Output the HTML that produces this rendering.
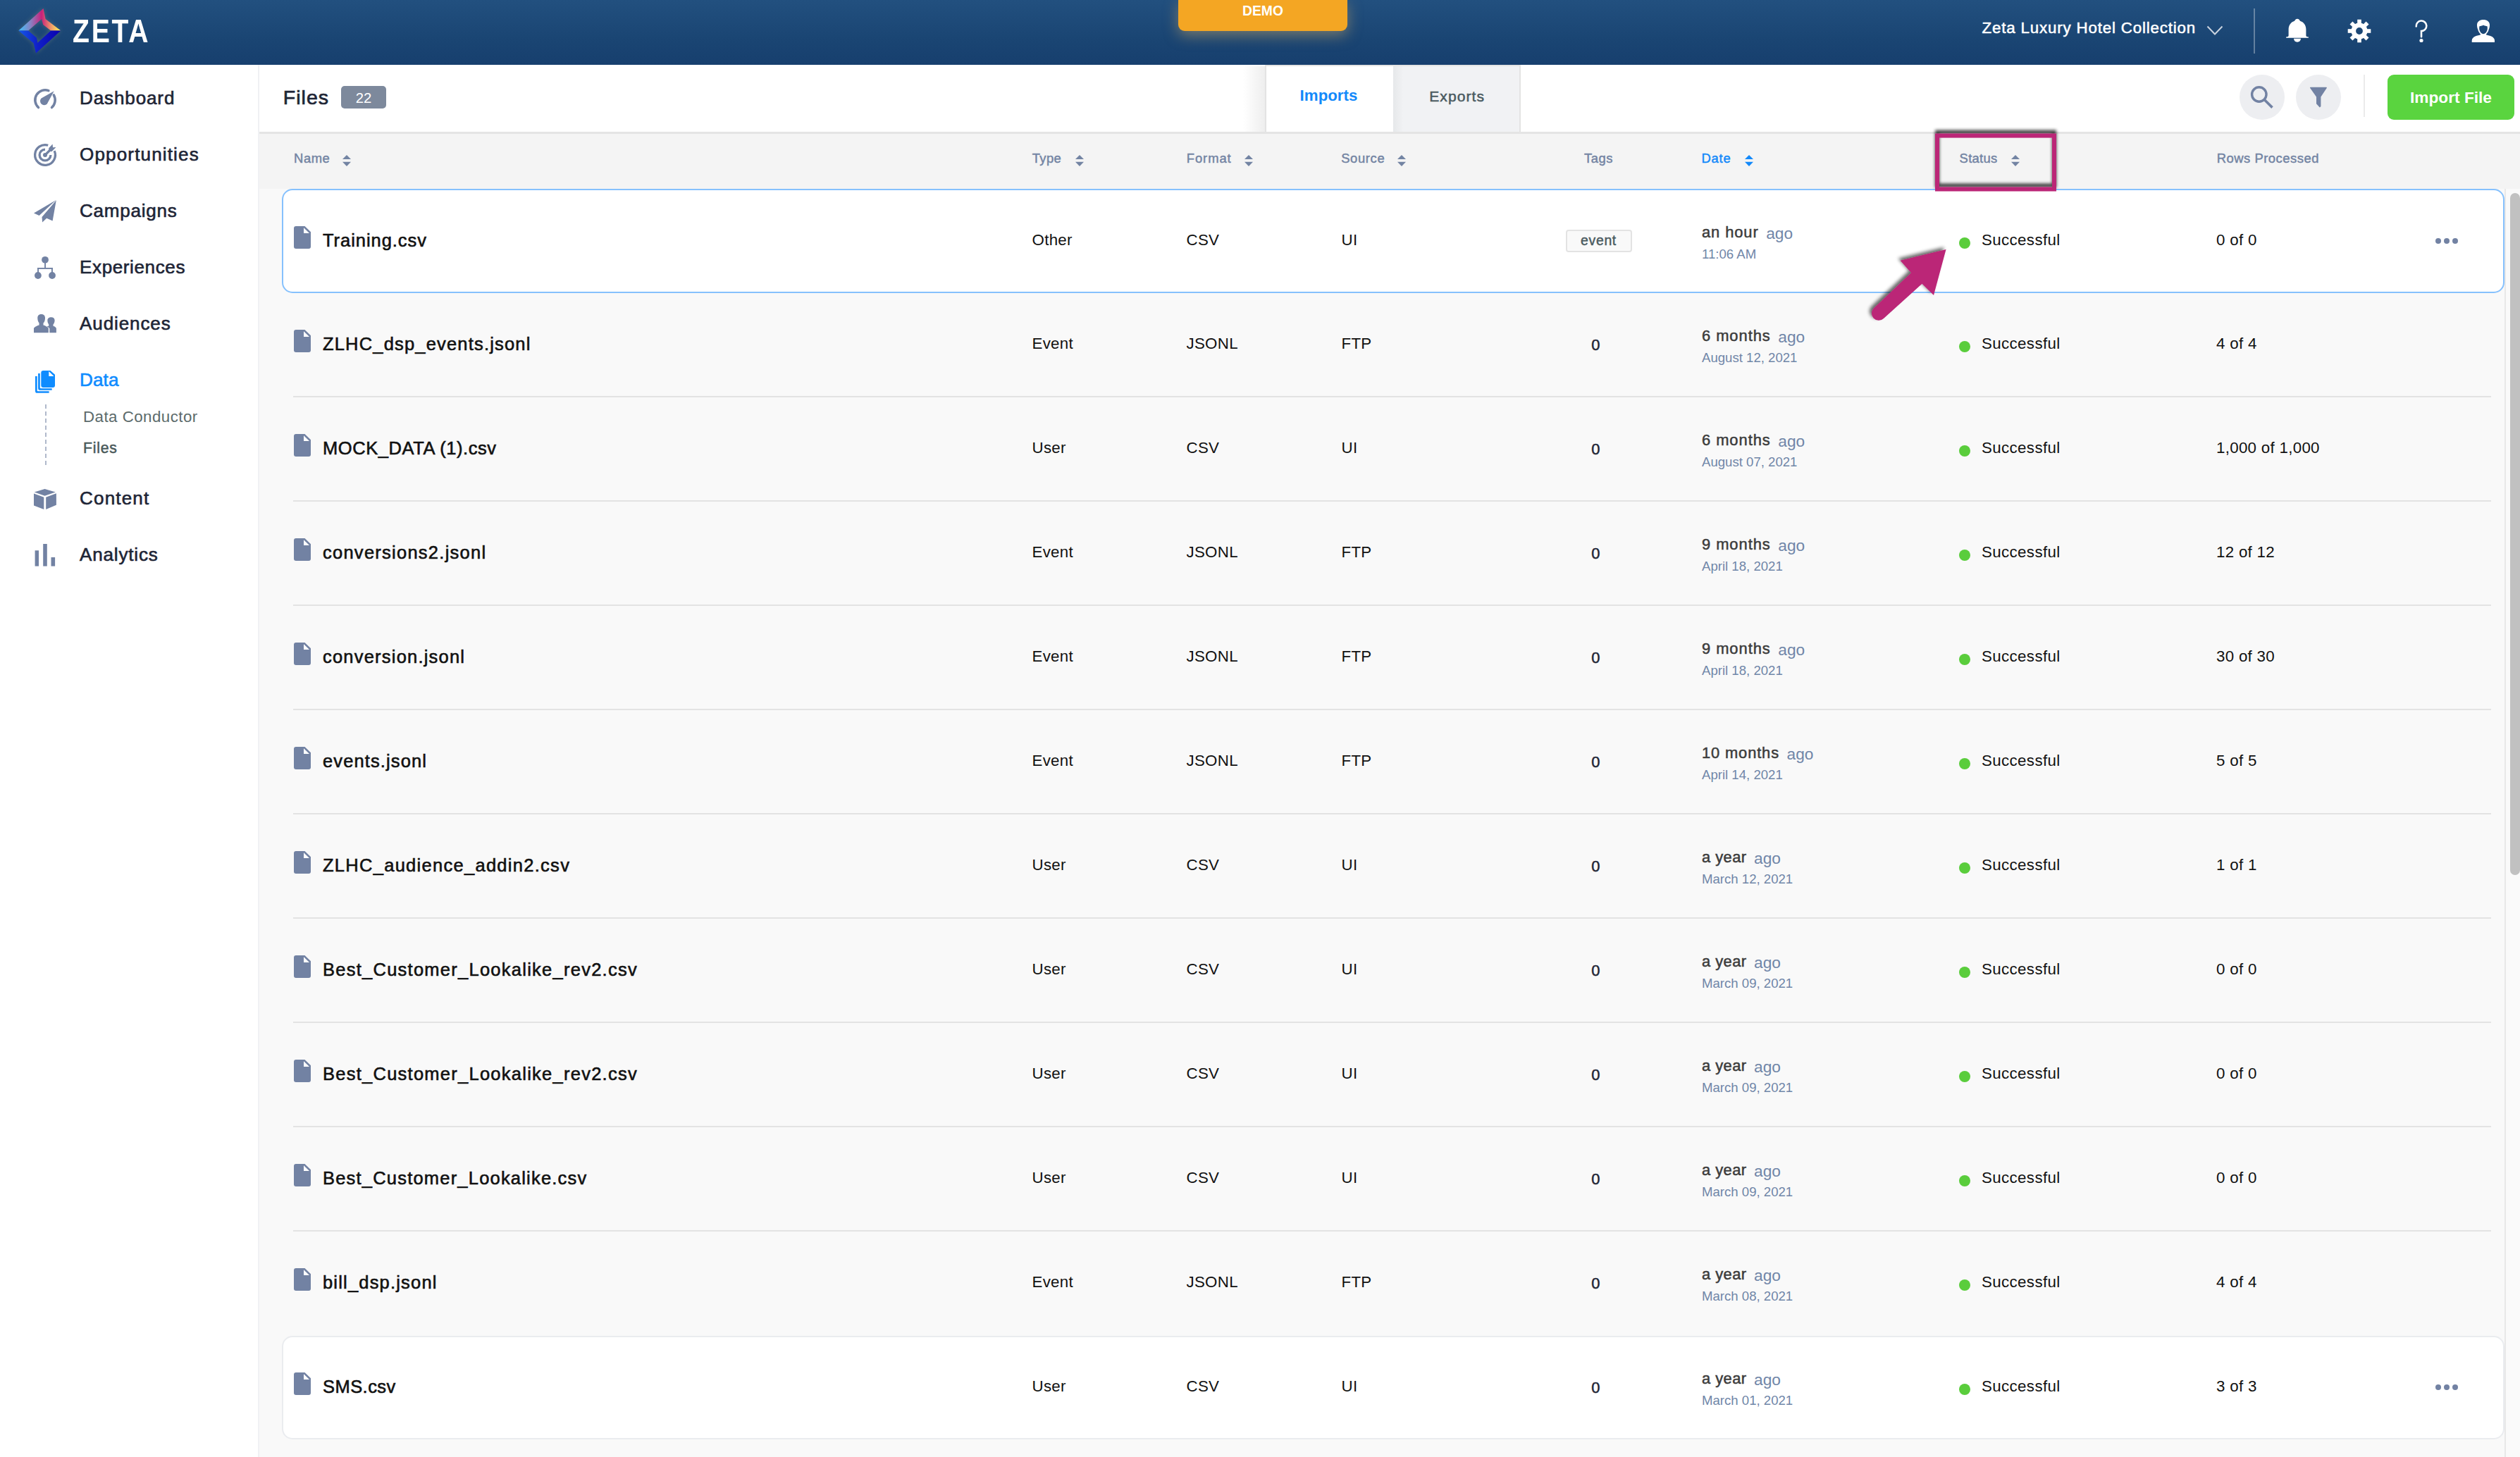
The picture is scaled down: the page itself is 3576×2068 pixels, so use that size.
<!DOCTYPE html>
<html><head><meta charset="utf-8"><title>Files</title>
<style>
html,body{margin:0;padding:0;}
body{width:3576px;height:2068px;overflow:hidden;position:relative;background:#f9f9f9;font-family:"Liberation Sans", sans-serif;}
.t{position:absolute;white-space:nowrap;font-family:"Liberation Sans", sans-serif;}
</style></head><body>
<div style="position:absolute;left:0px;top:0px;width:3576px;height:92px;background:linear-gradient(180deg,#22507f 0%,#1a4573 60%,#173f6e 100%);"></div>
<svg style="position:absolute;left:0px;top:0px;overflow:visible;" width="100" height="92" viewBox="0 0 100 92">
<defs>
<linearGradient id="lgU" x1="26" y1="0" x2="86" y2="0" gradientUnits="userSpaceOnUse">
<stop offset="0" stop-color="#3cc4ff"/><stop offset="0.3" stop-color="#8a7fc0"/><stop offset="0.55" stop-color="#c8207a"/><stop offset="0.78" stop-color="#ef9a6a"/><stop offset="1" stop-color="#fff75a"/></linearGradient>
<linearGradient id="lgD" x1="26" y1="0" x2="86" y2="0" gradientUnits="userSpaceOnUse">
<stop offset="0" stop-color="#1458e8"/><stop offset="0.45" stop-color="#1020c8"/><stop offset="1" stop-color="#0a00b0"/></linearGradient>
<filter id="lglow" x="-30%" y="-30%" width="160%" height="160%"><feGaussianBlur stdDeviation="3"/></filter>
</defs>
<g opacity="0.3" filter="url(#lglow)" fill="#b0b080"><polygon points="26.3,43.6 61.5,12 64.6,26.9 86.3,43.6 72.2,43.6 61.2,35 59.1,27.1 40.1,43.6"/><polygon points="26.3,43.6 40.1,43.6 51.8,53.5 53.4,60.8 72.2,43.6 86.3,43.6 51,75.4 47.6,61.3"/></g>
<polygon fill="url(#lgU)" points="26.3,43.6 61.5,12 64.6,26.9 86.3,43.6 72.2,43.6 61.2,35 59.1,27.1 40.1,43.6"/>
<polygon fill="url(#lgD)" points="26.3,43.6 40.1,43.6 51.8,53.5 53.4,60.8 72.2,43.6 86.3,43.6 51,75.4 47.6,61.3"/>
</svg>
<div class="t" style="left:103.00px;top:21.78px;font-size:45.5px;line-height:45.5px;color:#ffffff;font-weight:700;letter-spacing:3.200px;transform:scaleX(0.86);transform-origin:0 0;">ZETA</div>
<div style="position:absolute;left:1672px;top:0px;width:240px;height:44px;background:#f4a623;border-radius:0 0 9px 9px;box-shadow:0 6px 20px rgba(210,170,100,0.5);"></div>
<div class="t" style="left:1292.00px;width:1000px;text-align:center;top:5.66px;font-size:19.3px;line-height:19.3px;color:#ffffff;font-weight:700;">DEMO</div>
<div class="t" style="left:2812.50px;top:29.23px;font-size:22.29px;line-height:22.29px;color:#ffffff;letter-spacing:0.847px;-webkit-text-stroke:0.53px #ffffff;">Zeta Luxury Hotel Collection</div>
<svg style="position:absolute;left:3131px;top:36px;overflow:visible;" width="24" height="14" viewBox="0 0 24 14"><polyline points="1.5,1.5 12,12.5 22.5,1.5" fill="none" stroke="#c9d2de" stroke-width="2"/></svg>
<div style="position:absolute;left:3198px;top:12px;width:2px;height:64px;background:rgba(255,255,255,0.32);"></div>
<svg style="position:absolute;left:3242px;top:25.2px;overflow:visible;" width="36" height="36" viewBox="0 0 36 36"><path fill="#fff" d="M18,1.8c-2.1,0-3.4,1.6-3.9,2.9C9.3,6.2,5.6,10.4,5.6,16.7V25.6C5.6,26.8,4.5,27.6,2.1,27.6V28.8H33.9V27.6C31.5,27.6,30.4,26.8,30.4,25.6V16.7C30.4,10.4,26.7,6.2,21.9,4.7C21.4,3.4,20.1,1.8,18,1.8Z"/><path fill="#fff" d="M13,29.8H23A5,5 0 0 1 13,29.8Z"/></svg>
<svg style="position:absolute;left:3330px;top:25.7px;overflow:visible;" width="36" height="36" viewBox="0 0 36 36"><rect x="15.2" y="1.6999999999999993" width="5.6" height="8" transform="rotate(0 18 18)" fill="#fff"/><rect x="15.2" y="1.6999999999999993" width="5.6" height="8" transform="rotate(45 18 18)" fill="#fff"/><rect x="15.2" y="1.6999999999999993" width="5.6" height="8" transform="rotate(90 18 18)" fill="#fff"/><rect x="15.2" y="1.6999999999999993" width="5.6" height="8" transform="rotate(135 18 18)" fill="#fff"/><rect x="15.2" y="1.6999999999999993" width="5.6" height="8" transform="rotate(180 18 18)" fill="#fff"/><rect x="15.2" y="1.6999999999999993" width="5.6" height="8" transform="rotate(225 18 18)" fill="#fff"/><rect x="15.2" y="1.6999999999999993" width="5.6" height="8" transform="rotate(270 18 18)" fill="#fff"/><rect x="15.2" y="1.6999999999999993" width="5.6" height="8" transform="rotate(315 18 18)" fill="#fff"/><circle cx="18" cy="18" r="8.2" fill="none" stroke="#fff" stroke-width="6.6"/></svg>
<svg style="position:absolute;left:3424px;top:26px;overflow:visible;" width="24" height="36" viewBox="0 0 24 36"><path d="M4.75,11.4A7.3,7.3 0 1 1 12,18.1V26.2" fill="none" stroke="#fff" stroke-width="2.6" stroke-linecap="round"/><circle cx="12" cy="31.5" r="2.6" fill="#fff"/></svg>
<svg style="position:absolute;left:3506px;top:26px;overflow:visible;" width="36" height="36" viewBox="0 0 36 36"><path fill="#fff" d="M18,2C13,2 9,4.6 9,9.5C9,12 9.5,14.3 10.3,15.8C10.8,18.5 12,20.6 13.8,22.2L14.2,23.2C12.5,23.8 9,24.4 6.5,25.6C3.8,26.9 1.7,28.8 1.7,31.5V34H34V31.5C34,28.8 31.9,26.9 29.2,25.6C26.7,24.4 23.3,23.8 21.8,23.2L22.2,22.2C24,20.6 25.2,18.5 25.7,15.8C26.5,14.3 27,12 27,9.5C27,4.6 23,2 18,2ZM18,9.5C19,10.5 21.5,10.8 23.5,11.2C24,13 24,16 23.2,17.5C22.3,20 20.5,22.2 18,22.2C15.5,22.2 13.7,20 12.8,17.5C12,16 12,13 12.5,11.2C14.5,10.8 17,10.5 18,9.5Z"/></svg>
<div style="position:absolute;left:0px;top:92px;width:366px;height:1976px;background:#ffffff;"></div>
<div style="position:absolute;left:366px;top:92px;width:2px;height:1976px;background:#f0f1f4;"></div>
<div class="t" style="left:113.00px;top:125.93px;font-size:26.07px;line-height:26.07px;color:#1e2536;letter-spacing:0.859px;-webkit-text-stroke:0.62px #1e2536;">Dashboard</div>
<div class="t" style="left:113.00px;top:205.73px;font-size:26.07px;line-height:26.07px;color:#1e2536;letter-spacing:1.140px;-webkit-text-stroke:0.62px #1e2536;">Opportunities</div>
<div class="t" style="left:113.00px;top:285.73px;font-size:26.07px;line-height:26.07px;color:#1e2536;letter-spacing:0.759px;-webkit-text-stroke:0.62px #1e2536;">Campaigns</div>
<div class="t" style="left:113.00px;top:365.93px;font-size:26.07px;line-height:26.07px;color:#1e2536;letter-spacing:0.608px;-webkit-text-stroke:0.62px #1e2536;">Experiences</div>
<div class="t" style="left:113.00px;top:445.83px;font-size:26.07px;line-height:26.07px;color:#1e2536;letter-spacing:0.884px;-webkit-text-stroke:0.62px #1e2536;">Audiences</div>
<div class="t" style="left:113.00px;top:525.83px;font-size:26.07px;line-height:26.07px;color:#0f8cff;letter-spacing:0.125px;-webkit-text-stroke:0.62px #0f8cff;">Data</div>
<div class="t" style="left:113.00px;top:694.13px;font-size:26.07px;line-height:26.07px;color:#1e2536;letter-spacing:1.163px;-webkit-text-stroke:0.62px #1e2536;">Content</div>
<div class="t" style="left:113.00px;top:774.23px;font-size:26.07px;line-height:26.07px;color:#1e2536;letter-spacing:0.809px;-webkit-text-stroke:0.62px #1e2536;">Analytics</div>
<svg style="position:absolute;left:42px;top:120px;overflow:visible;" width="44" height="44" viewBox="0 0 44 44"><g fill="none" stroke="#7282a3" stroke-width="3.5" stroke-linecap="round">
<path d="M12.50,32.55A14.2,14.2 0 0 1 26.86,8.66"/><path d="M34.30,14.90A14.2,14.2 0 0 1 31.50,32.55"/></g>
<path fill="#7282a3" d="M34.7,9.2L24.8,27.4A5.6,5.6 0 1 1 16.6,19.5Z"/></svg>
<svg style="position:absolute;left:42px;top:200px;overflow:visible;" width="44" height="44" viewBox="0 0 44 44"><g fill="none" stroke="#7282a3" stroke-width="3.3">
<path d="M35.16,14.14A14.4,14.4 0 1 1 26.21,6.23"/>
<path d="M29.90,20.00A7.9,7.9 0 1 1 22.00,12.10"/></g>
<circle cx="22" cy="20" r="3" fill="#7282a3"/>
<path d="M22,20L31,11" stroke="#7282a3" stroke-width="3.2"/>
<path fill="#7282a3" d="M27.2,10.2L32.6,4.6L33,9.2L37.4,9.1L31.6,14.9L27.2,14.9Z"/></svg>
<svg style="position:absolute;left:42px;top:278px;overflow:visible;" width="44" height="44" viewBox="0 0 44 44"><path fill="#7282a3" d="M6,24.5L37.5,6L13.6,28Z"/><path fill="#7282a3" d="M37.8,6.2L32.6,35.6L24.2,31.7L18.1,37.5L17.5,29.9L32.7,12.3Z"/></svg>
<svg style="position:absolute;left:42px;top:360px;overflow:visible;" width="44" height="44" viewBox="0 0 44 44"><g fill="#7282a3"><circle cx="22" cy="8.8" r="4.9"/><circle cx="11.9" cy="31" r="4.9"/><circle cx="32" cy="31" r="4.9"/>
<rect x="21.1" y="9" width="1.9" height="12"/><rect x="11.1" y="20" width="21.8" height="1.9"/><rect x="11.1" y="20" width="1.9" height="8"/><rect x="31" y="20" width="1.9" height="8"/></g></svg>
<svg style="position:absolute;left:42px;top:440px;overflow:visible;" width="44" height="44" viewBox="0 0 44 44"><g fill="#7282a3">
<path d="M16.6,5.9C13.5,5.9 11.3,7.8 11.3,11C11.3,13 11.6,15 12.3,16.5C12.8,17.5 13.3,18 13.5,18.5V21.5C10.5,22.3 6,24.5 6,26.3V32.3H26.8V26.3C26.8,24.5 22.5,22.3 19.5,21.5V18.5C20,18 20.6,17.5 21,16.5C21.7,15 22,13 22,11C22,7.8 19.8,5.9 16.6,5.9Z"/>
<path d="M30.7,10.2C28,10.2 25.4,11.6 25.4,14.5C25.4,16 25.6,17.7 26.2,18.8C26.6,19.6 27,20 27.2,20.4V22.8C26,23 25.2,23.2 24.6,23.4C26.5,24.2 28.3,25.4 28.3,26.5V32.3H37.9V26.3C37.9,24.8 35.8,23.4 33.5,22.8V20.4C33.9,20 34.3,19.6 34.7,18.8C35.3,17.7 35.6,16 35.6,14.5C35.6,11.6 33.4,10.2 30.7,10.2Z"/></g></svg>
<svg style="position:absolute;left:42px;top:520px;overflow:visible;" width="44" height="44" viewBox="0 0 44 44"><g fill="#0f8cff">
<path d="M19.5,5.9H29.5L36,11.8V26.9A3,3 0 0 1 33,29.9H19.3A3,3 0 0 1 16.3,26.9V9.1A3.2,3.2 0 0 1 19.5,5.9Z"/>
<path d="M12.1,10H14.8V30.6A1.2,1.2 0 0 0 16,31.2H31.7V33.8H15A2.9,2.9 0 0 1 12.1,30.9Z"/>
<path d="M8,14H10.7V34.8A1.2,1.2 0 0 0 12,35.2H27.6V37.8H10.9A2.9,2.9 0 0 1 8,34.9Z"/></g>
<path fill="#fff" d="M27.3,7.1V14H34.4Z"/></svg>
<svg style="position:absolute;left:42px;top:688px;overflow:visible;" width="44" height="44" viewBox="0 0 44 44"><g fill="#7282a3"><path d="M6.7,10.4L21.5,6L36.8,10.4L21.5,15.8Z"/><path d="M6,12.6L20.3,17.8V34.9L6,29.5Z"/><path d="M23.2,17.8L37.9,12.2V28.7L23.2,34.9Z"/></g></svg>
<svg style="position:absolute;left:42px;top:768px;overflow:visible;" width="44" height="44" viewBox="0 0 44 44"><g fill="#7282a3"><rect x="7.6" y="13.3" width="5.4" height="22.3"/><rect x="19.2" y="4" width="5.6" height="31.6"/><rect x="30.5" y="23" width="5.6" height="12.6"/></g></svg>
<div style="position:absolute;left:64px;top:574px;width:2px;height:86px;background:repeating-linear-gradient(180deg,#b0b9cb 0 6px,transparent 6px 10px);"></div>
<div class="t" style="left:118.00px;top:581.42px;font-size:22.3px;line-height:22.3px;color:#5c6b6b;letter-spacing:0.470px;">Data Conductor</div>
<div class="t" style="left:118.00px;top:624.56px;font-size:21.19px;line-height:21.19px;color:#4a5a5b;letter-spacing:0.758px;-webkit-text-stroke:0.51px #4a5a5b;">Files</div>
<div style="position:absolute;left:368px;top:92px;width:3208px;height:95px;background:#ffffff;"></div>
<div class="t" style="left:401.70px;top:123.82px;font-size:28.56px;line-height:28.56px;color:#1e2535;letter-spacing:1.022px;-webkit-text-stroke:0.68px #1e2535;">Files</div>
<div style="position:absolute;left:484px;top:122px;width:64px;height:32px;background:#7d899c;border-radius:5px;"></div>
<div class="t" style="left:16.00px;width:1000px;text-align:center;top:129.22px;font-size:20.3px;line-height:20.3px;color:#ffffff;">22</div>
<div style="position:absolute;left:1764px;top:94px;width:31px;height:93px;background:linear-gradient(90deg,rgba(240,240,240,0),#eeeeee);"></div>
<div style="position:absolute;left:1795px;top:92px;width:182px;height:95px;background:#ffffff;border-left:2px solid #e3e3e3;border-top:2px solid #e3e3e3;box-sizing:border-box;"></div>
<div style="position:absolute;left:1977px;top:92px;width:181px;height:95px;background:linear-gradient(90deg,#e6e8ea 0,#f1f2f4 14px);border-top:2px solid #e3e3e3;border-right:2px solid #e3e3e3;box-sizing:border-box;"></div>
<div class="t" style="left:1385.50px;width:1000px;text-align:center;top:125.12px;font-size:22.3px;line-height:22.3px;color:#1389fa;font-weight:700;">Imports</div>
<div class="t" style="left:1567.70px;width:1000px;text-align:center;top:126.15px;font-size:21.09px;line-height:21.09px;color:#4a5a60;letter-spacing:1.060px;-webkit-text-stroke:0.51px #4a5a60;">Exports</div>
<div style="position:absolute;left:3178px;top:106px;width:64px;height:64px;background:#edeef1;border-radius:50%;"></div>
<div style="position:absolute;left:3258px;top:106px;width:64px;height:64px;background:#edeef1;border-radius:50%;"></div>
<svg style="position:absolute;left:3190px;top:118px;overflow:visible;" width="40" height="40" viewBox="0 0 40 40"><circle cx="15.8" cy="16" r="10.2" fill="none" stroke="#7282a3" stroke-width="3.4"/><path d="M23,23.2L34.5,34.6" stroke="#7282a3" stroke-width="3.6"/></svg>
<svg style="position:absolute;left:3270px;top:118px;overflow:visible;" width="40" height="40" viewBox="0 0 40 40"><path fill="#7282a3" d="M8.6,5.8H31.2A0.8,0.8 0 0 1 31.7,7.1L23.4,19.4V33L21.8,34.6L17,29.2V19.4L8.2,7.1A0.8,0.8 0 0 1 8.6,5.8Z"/></svg>
<div style="position:absolute;left:3354px;top:106px;width:2px;height:60px;background:#ebebeb;"></div>
<div style="position:absolute;left:3388px;top:106px;width:180px;height:64px;background:#5ad43f;border-radius:9px;"></div>
<div class="t" style="left:2978.00px;width:1000px;text-align:center;top:126.78px;font-size:22.7px;line-height:22.7px;color:#ffffff;font-weight:700;">Import File</div>
<div style="position:absolute;left:368px;top:187px;width:3208px;height:3px;background:#e4e4e4;"></div>
<div style="position:absolute;left:368px;top:190px;width:3208px;height:78px;background:#f4f4f4;"></div>
<div style="position:absolute;left:368px;top:268px;width:3208px;height:1800px;background:#f9f9f9;"></div>
<div class="t" style="left:417.00px;top:216.22px;font-size:18.41px;line-height:18.41px;color:#7384a3;letter-spacing:0.583px;-webkit-text-stroke:0.45px #7384a3;">Name</div>
<svg style="position:absolute;left:486px;top:220px;overflow:visible;" width="12" height="16" viewBox="0 0 12 16"><path fill="#7384a3" d="M6,0L12,6H0Z"/><path fill="#7384a3" d="M0,9.8H12L6,16Z"/></svg>
<div class="t" style="left:1464.70px;top:216.22px;font-size:18.41px;line-height:18.41px;color:#7384a3;letter-spacing:0.417px;-webkit-text-stroke:0.45px #7384a3;">Type</div>
<svg style="position:absolute;left:1526.2px;top:220px;overflow:visible;" width="12" height="16" viewBox="0 0 12 16"><path fill="#7384a3" d="M6,0L12,6H0Z"/><path fill="#7384a3" d="M0,9.8H12L6,16Z"/></svg>
<div class="t" style="left:1683.70px;top:216.22px;font-size:18.41px;line-height:18.41px;color:#7384a3;letter-spacing:0.950px;-webkit-text-stroke:0.45px #7384a3;">Format</div>
<svg style="position:absolute;left:1765.9px;top:220px;overflow:visible;" width="12" height="16" viewBox="0 0 12 16"><path fill="#7384a3" d="M6,0L12,6H0Z"/><path fill="#7384a3" d="M0,9.8H12L6,16Z"/></svg>
<div class="t" style="left:1903.20px;top:216.22px;font-size:18.41px;line-height:18.41px;color:#7384a3;letter-spacing:0.630px;-webkit-text-stroke:0.45px #7384a3;">Source</div>
<svg style="position:absolute;left:1983.3px;top:220px;overflow:visible;" width="12" height="16" viewBox="0 0 12 16"><path fill="#7384a3" d="M6,0L12,6H0Z"/><path fill="#7384a3" d="M0,9.8H12L6,16Z"/></svg>
<div class="t" style="left:2248.00px;top:216.22px;font-size:18.41px;line-height:18.41px;color:#7384a3;letter-spacing:0.517px;-webkit-text-stroke:0.45px #7384a3;">Tags</div>
<div class="t" style="left:2414.60px;top:216.22px;font-size:18.41px;line-height:18.41px;color:#1389fa;letter-spacing:0.717px;-webkit-text-stroke:0.45px #1389fa;">Date</div>
<svg style="position:absolute;left:2475.7px;top:220px;overflow:visible;" width="12" height="16" viewBox="0 0 12 16"><path fill="#1389fa" d="M6,0L12,6H0Z"/><path fill="#1389fa" d="M0,9.8H12L6,16Z"/></svg>
<div class="t" style="left:2780.60px;top:216.22px;font-size:18.41px;line-height:18.41px;color:#7384a3;letter-spacing:0.270px;-webkit-text-stroke:0.45px #7384a3;">Status</div>
<svg style="position:absolute;left:2854px;top:220px;overflow:visible;" width="12" height="16" viewBox="0 0 12 16"><path fill="#7384a3" d="M6,0L12,6H0Z"/><path fill="#7384a3" d="M0,9.8H12L6,16Z"/></svg>
<div class="t" style="left:3145.70px;top:216.22px;font-size:18.41px;line-height:18.41px;color:#7384a3;letter-spacing:0.519px;-webkit-text-stroke:0.45px #7384a3;">Rows Processed</div>
<div style="position:absolute;left:400px;top:268px;width:3154px;height:148px;background:#ffffff;border:2px solid #86c1fd;border-radius:15px;box-sizing:border-box;"></div>
<div style="position:absolute;left:400px;top:1896px;width:3154px;height:147px;background:#ffffff;border:2px solid #eaecef;border-radius:15px;box-sizing:border-box;"></div>
<div style="position:absolute;left:416px;top:562px;width:3119px;height:2px;background:#e3e3e3;"></div>
<div style="position:absolute;left:416px;top:710px;width:3119px;height:2px;background:#e3e3e3;"></div>
<div style="position:absolute;left:416px;top:858px;width:3119px;height:2px;background:#e3e3e3;"></div>
<div style="position:absolute;left:416px;top:1006px;width:3119px;height:2px;background:#e3e3e3;"></div>
<div style="position:absolute;left:416px;top:1154px;width:3119px;height:2px;background:#e3e3e3;"></div>
<div style="position:absolute;left:416px;top:1302px;width:3119px;height:2px;background:#e3e3e3;"></div>
<div style="position:absolute;left:416px;top:1450px;width:3119px;height:2px;background:#e3e3e3;"></div>
<div style="position:absolute;left:416px;top:1598px;width:3119px;height:2px;background:#e3e3e3;"></div>
<div style="position:absolute;left:416px;top:1746px;width:3119px;height:2px;background:#e3e3e3;"></div>
<svg style="position:absolute;left:417px;top:321px;overflow:visible;" width="24" height="32" viewBox="0 0 24 32"><path fill="#7282a3" d="M3,0H15.5L24,8.3V29A3,3 0 0 1 21,32H3A3,3 0 0 1 0,29V3A3,3 0 0 1 3,0Z"/><path fill="#fff" d="M14,2.2V10H22Z"/></svg>
<div class="t" style="left:458.00px;top:329.24px;font-size:25.47px;line-height:25.47px;color:#111111;letter-spacing:0.963px;-webkit-text-stroke:0.61px #111111;">Training.csv</div>
<div class="t" style="left:1464.50px;top:330.42px;font-size:22.3px;line-height:22.3px;color:#111111;letter-spacing:0.300px;">Other</div>
<div class="t" style="left:1683.50px;top:330.42px;font-size:22.3px;line-height:22.3px;color:#111111;letter-spacing:0.300px;">CSV</div>
<div class="t" style="left:1903.50px;top:330.42px;font-size:22.3px;line-height:22.3px;color:#111111;letter-spacing:0.300px;">UI</div>
<div style="position:absolute;left:2222px;top:326px;width:94px;height:32px;background:#f9f9f9;border:2px solid #e3e3e3;border-radius:4px;box-sizing:border-box;"></div>
<div class="t" style="left:1768.50px;width:1000px;text-align:center;top:331.78px;font-size:19.4px;line-height:19.4px;color:#4a5a60;letter-spacing:0.695px;-webkit-text-stroke:0.46px #4a5a60;">event</div>
<div class="t" style="left:2415.00px;top:319.47px;font-size:21.89px;line-height:21.89px;color:#3c3c3c;letter-spacing:0.917px;-webkit-text-stroke:0.52px #3c3c3c;">an hour</div>
<div class="t" style="left:2506.16px;top:319.78px;font-size:22.7px;line-height:22.7px;color:#7086a8;">ago</div>
<div class="t" style="left:2415.00px;top:351.76px;font-size:18.6px;line-height:18.6px;color:#7086a8;">11:06 AM</div>
<div style="position:absolute;left:2780px;top:336.5px;width:16px;height:16px;background:#5acd3c;border-radius:50%;"></div>
<div class="t" style="left:2812.00px;top:330.12px;font-size:22.3px;line-height:22.3px;color:#111111;letter-spacing:0.380px;">Successful</div>
<div class="t" style="left:3145.00px;top:330.42px;font-size:22.3px;line-height:22.3px;color:#111111;letter-spacing:0.300px;">0 of 0</div>
<div style="position:absolute;left:3456px;top:338px;width:8px;height:8px;background:#7282a3;border-radius:50%;"></div>
<div style="position:absolute;left:3468px;top:338px;width:8px;height:8px;background:#7282a3;border-radius:50%;"></div>
<div style="position:absolute;left:3480px;top:338px;width:8px;height:8px;background:#7282a3;border-radius:50%;"></div>
<svg style="position:absolute;left:417px;top:468px;overflow:visible;" width="24" height="32" viewBox="0 0 24 32"><path fill="#7282a3" d="M3,0H15.5L24,8.3V29A3,3 0 0 1 21,32H3A3,3 0 0 1 0,29V3A3,3 0 0 1 3,0Z"/><path fill="#fff" d="M14,2.2V10H22Z"/></svg>
<div class="t" style="left:458.00px;top:476.24px;font-size:25.47px;line-height:25.47px;color:#111111;letter-spacing:1.199px;-webkit-text-stroke:0.61px #111111;">ZLHC_dsp_events.jsonl</div>
<div class="t" style="left:1464.50px;top:477.42px;font-size:22.3px;line-height:22.3px;color:#111111;letter-spacing:0.300px;">Event</div>
<div class="t" style="left:1683.50px;top:477.42px;font-size:22.3px;line-height:22.3px;color:#111111;letter-spacing:0.300px;">JSONL</div>
<div class="t" style="left:1903.50px;top:477.42px;font-size:22.3px;line-height:22.3px;color:#111111;letter-spacing:0.300px;">FTP</div>
<div class="t" style="left:1764.30px;width:1000px;text-align:center;top:479.27px;font-size:21.89px;line-height:21.89px;color:#1e2535;letter-spacing:0.061px;-webkit-text-stroke:0.52px #1e2535;">0</div>
<div class="t" style="left:2415.00px;top:466.47px;font-size:21.89px;line-height:21.89px;color:#3c3c3c;letter-spacing:0.968px;-webkit-text-stroke:0.52px #3c3c3c;">6 months</div>
<div class="t" style="left:2523.29px;top:466.78px;font-size:22.7px;line-height:22.7px;color:#7086a8;">ago</div>
<div class="t" style="left:2415.00px;top:498.76px;font-size:18.6px;line-height:18.6px;color:#7086a8;">August 12, 2021</div>
<div style="position:absolute;left:2780px;top:483.5px;width:16px;height:16px;background:#5acd3c;border-radius:50%;"></div>
<div class="t" style="left:2812.00px;top:477.12px;font-size:22.3px;line-height:22.3px;color:#111111;letter-spacing:0.380px;">Successful</div>
<div class="t" style="left:3145.00px;top:477.42px;font-size:22.3px;line-height:22.3px;color:#111111;letter-spacing:0.300px;">4 of 4</div>
<svg style="position:absolute;left:417px;top:616px;overflow:visible;" width="24" height="32" viewBox="0 0 24 32"><path fill="#7282a3" d="M3,0H15.5L24,8.3V29A3,3 0 0 1 21,32H3A3,3 0 0 1 0,29V3A3,3 0 0 1 3,0Z"/><path fill="#fff" d="M14,2.2V10H22Z"/></svg>
<div class="t" style="left:458.00px;top:624.24px;font-size:25.47px;line-height:25.47px;color:#111111;letter-spacing:0.581px;-webkit-text-stroke:0.61px #111111;">MOCK_DATA (1).csv</div>
<div class="t" style="left:1464.50px;top:625.42px;font-size:22.3px;line-height:22.3px;color:#111111;letter-spacing:0.300px;">User</div>
<div class="t" style="left:1683.50px;top:625.42px;font-size:22.3px;line-height:22.3px;color:#111111;letter-spacing:0.300px;">CSV</div>
<div class="t" style="left:1903.50px;top:625.42px;font-size:22.3px;line-height:22.3px;color:#111111;letter-spacing:0.300px;">UI</div>
<div class="t" style="left:1764.30px;width:1000px;text-align:center;top:627.27px;font-size:21.89px;line-height:21.89px;color:#1e2535;letter-spacing:0.061px;-webkit-text-stroke:0.52px #1e2535;">0</div>
<div class="t" style="left:2415.00px;top:614.47px;font-size:21.89px;line-height:21.89px;color:#3c3c3c;letter-spacing:0.968px;-webkit-text-stroke:0.52px #3c3c3c;">6 months</div>
<div class="t" style="left:2523.29px;top:614.78px;font-size:22.7px;line-height:22.7px;color:#7086a8;">ago</div>
<div class="t" style="left:2415.00px;top:646.76px;font-size:18.6px;line-height:18.6px;color:#7086a8;">August 07, 2021</div>
<div style="position:absolute;left:2780px;top:631.5px;width:16px;height:16px;background:#5acd3c;border-radius:50%;"></div>
<div class="t" style="left:2812.00px;top:625.12px;font-size:22.3px;line-height:22.3px;color:#111111;letter-spacing:0.380px;">Successful</div>
<div class="t" style="left:3145.00px;top:625.42px;font-size:22.3px;line-height:22.3px;color:#111111;letter-spacing:0.300px;">1,000 of 1,000</div>
<svg style="position:absolute;left:417px;top:764px;overflow:visible;" width="24" height="32" viewBox="0 0 24 32"><path fill="#7282a3" d="M3,0H15.5L24,8.3V29A3,3 0 0 1 21,32H3A3,3 0 0 1 0,29V3A3,3 0 0 1 3,0Z"/><path fill="#fff" d="M14,2.2V10H22Z"/></svg>
<div class="t" style="left:458.00px;top:772.24px;font-size:25.47px;line-height:25.47px;color:#111111;letter-spacing:1.270px;-webkit-text-stroke:0.61px #111111;">conversions2.jsonl</div>
<div class="t" style="left:1464.50px;top:773.42px;font-size:22.3px;line-height:22.3px;color:#111111;letter-spacing:0.300px;">Event</div>
<div class="t" style="left:1683.50px;top:773.42px;font-size:22.3px;line-height:22.3px;color:#111111;letter-spacing:0.300px;">JSONL</div>
<div class="t" style="left:1903.50px;top:773.42px;font-size:22.3px;line-height:22.3px;color:#111111;letter-spacing:0.300px;">FTP</div>
<div class="t" style="left:1764.30px;width:1000px;text-align:center;top:775.27px;font-size:21.89px;line-height:21.89px;color:#1e2535;letter-spacing:0.061px;-webkit-text-stroke:0.52px #1e2535;">0</div>
<div class="t" style="left:2415.00px;top:762.47px;font-size:21.89px;line-height:21.89px;color:#3c3c3c;letter-spacing:0.968px;-webkit-text-stroke:0.52px #3c3c3c;">9 months</div>
<div class="t" style="left:2523.29px;top:762.78px;font-size:22.7px;line-height:22.7px;color:#7086a8;">ago</div>
<div class="t" style="left:2415.00px;top:794.76px;font-size:18.6px;line-height:18.6px;color:#7086a8;">April 18, 2021</div>
<div style="position:absolute;left:2780px;top:779.5px;width:16px;height:16px;background:#5acd3c;border-radius:50%;"></div>
<div class="t" style="left:2812.00px;top:773.12px;font-size:22.3px;line-height:22.3px;color:#111111;letter-spacing:0.380px;">Successful</div>
<div class="t" style="left:3145.00px;top:773.42px;font-size:22.3px;line-height:22.3px;color:#111111;letter-spacing:0.300px;">12 of 12</div>
<svg style="position:absolute;left:417px;top:912px;overflow:visible;" width="24" height="32" viewBox="0 0 24 32"><path fill="#7282a3" d="M3,0H15.5L24,8.3V29A3,3 0 0 1 21,32H3A3,3 0 0 1 0,29V3A3,3 0 0 1 3,0Z"/><path fill="#fff" d="M14,2.2V10H22Z"/></svg>
<div class="t" style="left:458.00px;top:920.24px;font-size:25.47px;line-height:25.47px;color:#111111;letter-spacing:1.226px;-webkit-text-stroke:0.61px #111111;">conversion.jsonl</div>
<div class="t" style="left:1464.50px;top:921.42px;font-size:22.3px;line-height:22.3px;color:#111111;letter-spacing:0.300px;">Event</div>
<div class="t" style="left:1683.50px;top:921.42px;font-size:22.3px;line-height:22.3px;color:#111111;letter-spacing:0.300px;">JSONL</div>
<div class="t" style="left:1903.50px;top:921.42px;font-size:22.3px;line-height:22.3px;color:#111111;letter-spacing:0.300px;">FTP</div>
<div class="t" style="left:1764.30px;width:1000px;text-align:center;top:923.27px;font-size:21.89px;line-height:21.89px;color:#1e2535;letter-spacing:0.061px;-webkit-text-stroke:0.52px #1e2535;">0</div>
<div class="t" style="left:2415.00px;top:910.47px;font-size:21.89px;line-height:21.89px;color:#3c3c3c;letter-spacing:0.968px;-webkit-text-stroke:0.52px #3c3c3c;">9 months</div>
<div class="t" style="left:2523.29px;top:910.78px;font-size:22.7px;line-height:22.7px;color:#7086a8;">ago</div>
<div class="t" style="left:2415.00px;top:942.76px;font-size:18.6px;line-height:18.6px;color:#7086a8;">April 18, 2021</div>
<div style="position:absolute;left:2780px;top:927.5px;width:16px;height:16px;background:#5acd3c;border-radius:50%;"></div>
<div class="t" style="left:2812.00px;top:921.12px;font-size:22.3px;line-height:22.3px;color:#111111;letter-spacing:0.380px;">Successful</div>
<div class="t" style="left:3145.00px;top:921.42px;font-size:22.3px;line-height:22.3px;color:#111111;letter-spacing:0.300px;">30 of 30</div>
<svg style="position:absolute;left:417px;top:1060px;overflow:visible;" width="24" height="32" viewBox="0 0 24 32"><path fill="#7282a3" d="M3,0H15.5L24,8.3V29A3,3 0 0 1 21,32H3A3,3 0 0 1 0,29V3A3,3 0 0 1 3,0Z"/><path fill="#fff" d="M14,2.2V10H22Z"/></svg>
<div class="t" style="left:458.00px;top:1068.24px;font-size:25.47px;line-height:25.47px;color:#111111;letter-spacing:1.135px;-webkit-text-stroke:0.61px #111111;">events.jsonl</div>
<div class="t" style="left:1464.50px;top:1069.42px;font-size:22.3px;line-height:22.3px;color:#111111;letter-spacing:0.300px;">Event</div>
<div class="t" style="left:1683.50px;top:1069.42px;font-size:22.3px;line-height:22.3px;color:#111111;letter-spacing:0.300px;">JSONL</div>
<div class="t" style="left:1903.50px;top:1069.42px;font-size:22.3px;line-height:22.3px;color:#111111;letter-spacing:0.300px;">FTP</div>
<div class="t" style="left:1764.30px;width:1000px;text-align:center;top:1071.27px;font-size:21.89px;line-height:21.89px;color:#1e2535;letter-spacing:0.061px;-webkit-text-stroke:0.52px #1e2535;">0</div>
<div class="t" style="left:2415.00px;top:1058.47px;font-size:21.89px;line-height:21.89px;color:#3c3c3c;letter-spacing:0.868px;-webkit-text-stroke:0.52px #3c3c3c;">10 months</div>
<div class="t" style="left:2535.52px;top:1058.78px;font-size:22.7px;line-height:22.7px;color:#7086a8;">ago</div>
<div class="t" style="left:2415.00px;top:1090.76px;font-size:18.6px;line-height:18.6px;color:#7086a8;">April 14, 2021</div>
<div style="position:absolute;left:2780px;top:1075.5px;width:16px;height:16px;background:#5acd3c;border-radius:50%;"></div>
<div class="t" style="left:2812.00px;top:1069.12px;font-size:22.3px;line-height:22.3px;color:#111111;letter-spacing:0.380px;">Successful</div>
<div class="t" style="left:3145.00px;top:1069.42px;font-size:22.3px;line-height:22.3px;color:#111111;letter-spacing:0.300px;">5 of 5</div>
<svg style="position:absolute;left:417px;top:1208px;overflow:visible;" width="24" height="32" viewBox="0 0 24 32"><path fill="#7282a3" d="M3,0H15.5L24,8.3V29A3,3 0 0 1 21,32H3A3,3 0 0 1 0,29V3A3,3 0 0 1 3,0Z"/><path fill="#fff" d="M14,2.2V10H22Z"/></svg>
<div class="t" style="left:458.00px;top:1216.24px;font-size:25.47px;line-height:25.47px;color:#111111;letter-spacing:1.300px;-webkit-text-stroke:0.61px #111111;">ZLHC_audience_addin2.csv</div>
<div class="t" style="left:1464.50px;top:1217.42px;font-size:22.3px;line-height:22.3px;color:#111111;letter-spacing:0.300px;">User</div>
<div class="t" style="left:1683.50px;top:1217.42px;font-size:22.3px;line-height:22.3px;color:#111111;letter-spacing:0.300px;">CSV</div>
<div class="t" style="left:1903.50px;top:1217.42px;font-size:22.3px;line-height:22.3px;color:#111111;letter-spacing:0.300px;">UI</div>
<div class="t" style="left:1764.30px;width:1000px;text-align:center;top:1219.27px;font-size:21.89px;line-height:21.89px;color:#1e2535;letter-spacing:0.061px;-webkit-text-stroke:0.52px #1e2535;">0</div>
<div class="t" style="left:2415.00px;top:1206.47px;font-size:21.89px;line-height:21.89px;color:#3c3c3c;letter-spacing:0.463px;-webkit-text-stroke:0.52px #3c3c3c;">a year</div>
<div class="t" style="left:2489.12px;top:1206.78px;font-size:22.7px;line-height:22.7px;color:#7086a8;">ago</div>
<div class="t" style="left:2415.00px;top:1238.76px;font-size:18.6px;line-height:18.6px;color:#7086a8;">March 12, 2021</div>
<div style="position:absolute;left:2780px;top:1223.5px;width:16px;height:16px;background:#5acd3c;border-radius:50%;"></div>
<div class="t" style="left:2812.00px;top:1217.12px;font-size:22.3px;line-height:22.3px;color:#111111;letter-spacing:0.380px;">Successful</div>
<div class="t" style="left:3145.00px;top:1217.42px;font-size:22.3px;line-height:22.3px;color:#111111;letter-spacing:0.300px;">1 of 1</div>
<svg style="position:absolute;left:417px;top:1356px;overflow:visible;" width="24" height="32" viewBox="0 0 24 32"><path fill="#7282a3" d="M3,0H15.5L24,8.3V29A3,3 0 0 1 21,32H3A3,3 0 0 1 0,29V3A3,3 0 0 1 3,0Z"/><path fill="#fff" d="M14,2.2V10H22Z"/></svg>
<div class="t" style="left:458.00px;top:1364.24px;font-size:25.47px;line-height:25.47px;color:#111111;letter-spacing:1.271px;-webkit-text-stroke:0.61px #111111;">Best_Customer_Lookalike_rev2.csv</div>
<div class="t" style="left:1464.50px;top:1365.42px;font-size:22.3px;line-height:22.3px;color:#111111;letter-spacing:0.300px;">User</div>
<div class="t" style="left:1683.50px;top:1365.42px;font-size:22.3px;line-height:22.3px;color:#111111;letter-spacing:0.300px;">CSV</div>
<div class="t" style="left:1903.50px;top:1365.42px;font-size:22.3px;line-height:22.3px;color:#111111;letter-spacing:0.300px;">UI</div>
<div class="t" style="left:1764.30px;width:1000px;text-align:center;top:1367.27px;font-size:21.89px;line-height:21.89px;color:#1e2535;letter-spacing:0.061px;-webkit-text-stroke:0.52px #1e2535;">0</div>
<div class="t" style="left:2415.00px;top:1354.47px;font-size:21.89px;line-height:21.89px;color:#3c3c3c;letter-spacing:0.463px;-webkit-text-stroke:0.52px #3c3c3c;">a year</div>
<div class="t" style="left:2489.12px;top:1354.78px;font-size:22.7px;line-height:22.7px;color:#7086a8;">ago</div>
<div class="t" style="left:2415.00px;top:1386.76px;font-size:18.6px;line-height:18.6px;color:#7086a8;">March 09, 2021</div>
<div style="position:absolute;left:2780px;top:1371.5px;width:16px;height:16px;background:#5acd3c;border-radius:50%;"></div>
<div class="t" style="left:2812.00px;top:1365.12px;font-size:22.3px;line-height:22.3px;color:#111111;letter-spacing:0.380px;">Successful</div>
<div class="t" style="left:3145.00px;top:1365.42px;font-size:22.3px;line-height:22.3px;color:#111111;letter-spacing:0.300px;">0 of 0</div>
<svg style="position:absolute;left:417px;top:1504px;overflow:visible;" width="24" height="32" viewBox="0 0 24 32"><path fill="#7282a3" d="M3,0H15.5L24,8.3V29A3,3 0 0 1 21,32H3A3,3 0 0 1 0,29V3A3,3 0 0 1 3,0Z"/><path fill="#fff" d="M14,2.2V10H22Z"/></svg>
<div class="t" style="left:458.00px;top:1512.24px;font-size:25.47px;line-height:25.47px;color:#111111;letter-spacing:1.271px;-webkit-text-stroke:0.61px #111111;">Best_Customer_Lookalike_rev2.csv</div>
<div class="t" style="left:1464.50px;top:1513.42px;font-size:22.3px;line-height:22.3px;color:#111111;letter-spacing:0.300px;">User</div>
<div class="t" style="left:1683.50px;top:1513.42px;font-size:22.3px;line-height:22.3px;color:#111111;letter-spacing:0.300px;">CSV</div>
<div class="t" style="left:1903.50px;top:1513.42px;font-size:22.3px;line-height:22.3px;color:#111111;letter-spacing:0.300px;">UI</div>
<div class="t" style="left:1764.30px;width:1000px;text-align:center;top:1515.27px;font-size:21.89px;line-height:21.89px;color:#1e2535;letter-spacing:0.061px;-webkit-text-stroke:0.52px #1e2535;">0</div>
<div class="t" style="left:2415.00px;top:1502.47px;font-size:21.89px;line-height:21.89px;color:#3c3c3c;letter-spacing:0.463px;-webkit-text-stroke:0.52px #3c3c3c;">a year</div>
<div class="t" style="left:2489.12px;top:1502.78px;font-size:22.7px;line-height:22.7px;color:#7086a8;">ago</div>
<div class="t" style="left:2415.00px;top:1534.76px;font-size:18.6px;line-height:18.6px;color:#7086a8;">March 09, 2021</div>
<div style="position:absolute;left:2780px;top:1519.5px;width:16px;height:16px;background:#5acd3c;border-radius:50%;"></div>
<div class="t" style="left:2812.00px;top:1513.12px;font-size:22.3px;line-height:22.3px;color:#111111;letter-spacing:0.380px;">Successful</div>
<div class="t" style="left:3145.00px;top:1513.42px;font-size:22.3px;line-height:22.3px;color:#111111;letter-spacing:0.300px;">0 of 0</div>
<svg style="position:absolute;left:417px;top:1652px;overflow:visible;" width="24" height="32" viewBox="0 0 24 32"><path fill="#7282a3" d="M3,0H15.5L24,8.3V29A3,3 0 0 1 21,32H3A3,3 0 0 1 0,29V3A3,3 0 0 1 3,0Z"/><path fill="#fff" d="M14,2.2V10H22Z"/></svg>
<div class="t" style="left:458.00px;top:1660.24px;font-size:25.47px;line-height:25.47px;color:#111111;letter-spacing:1.219px;-webkit-text-stroke:0.61px #111111;">Best_Customer_Lookalike.csv</div>
<div class="t" style="left:1464.50px;top:1661.42px;font-size:22.3px;line-height:22.3px;color:#111111;letter-spacing:0.300px;">User</div>
<div class="t" style="left:1683.50px;top:1661.42px;font-size:22.3px;line-height:22.3px;color:#111111;letter-spacing:0.300px;">CSV</div>
<div class="t" style="left:1903.50px;top:1661.42px;font-size:22.3px;line-height:22.3px;color:#111111;letter-spacing:0.300px;">UI</div>
<div class="t" style="left:1764.30px;width:1000px;text-align:center;top:1663.27px;font-size:21.89px;line-height:21.89px;color:#1e2535;letter-spacing:0.061px;-webkit-text-stroke:0.52px #1e2535;">0</div>
<div class="t" style="left:2415.00px;top:1650.47px;font-size:21.89px;line-height:21.89px;color:#3c3c3c;letter-spacing:0.463px;-webkit-text-stroke:0.52px #3c3c3c;">a year</div>
<div class="t" style="left:2489.12px;top:1650.78px;font-size:22.7px;line-height:22.7px;color:#7086a8;">ago</div>
<div class="t" style="left:2415.00px;top:1682.76px;font-size:18.6px;line-height:18.6px;color:#7086a8;">March 09, 2021</div>
<div style="position:absolute;left:2780px;top:1667.5px;width:16px;height:16px;background:#5acd3c;border-radius:50%;"></div>
<div class="t" style="left:2812.00px;top:1661.12px;font-size:22.3px;line-height:22.3px;color:#111111;letter-spacing:0.380px;">Successful</div>
<div class="t" style="left:3145.00px;top:1661.42px;font-size:22.3px;line-height:22.3px;color:#111111;letter-spacing:0.300px;">0 of 0</div>
<svg style="position:absolute;left:417px;top:1800px;overflow:visible;" width="24" height="32" viewBox="0 0 24 32"><path fill="#7282a3" d="M3,0H15.5L24,8.3V29A3,3 0 0 1 21,32H3A3,3 0 0 1 0,29V3A3,3 0 0 1 3,0Z"/><path fill="#fff" d="M14,2.2V10H22Z"/></svg>
<div class="t" style="left:458.00px;top:1808.24px;font-size:25.47px;line-height:25.47px;color:#111111;letter-spacing:1.199px;-webkit-text-stroke:0.61px #111111;">bill_dsp.jsonl</div>
<div class="t" style="left:1464.50px;top:1809.42px;font-size:22.3px;line-height:22.3px;color:#111111;letter-spacing:0.300px;">Event</div>
<div class="t" style="left:1683.50px;top:1809.42px;font-size:22.3px;line-height:22.3px;color:#111111;letter-spacing:0.300px;">JSONL</div>
<div class="t" style="left:1903.50px;top:1809.42px;font-size:22.3px;line-height:22.3px;color:#111111;letter-spacing:0.300px;">FTP</div>
<div class="t" style="left:1764.30px;width:1000px;text-align:center;top:1811.27px;font-size:21.89px;line-height:21.89px;color:#1e2535;letter-spacing:0.061px;-webkit-text-stroke:0.52px #1e2535;">0</div>
<div class="t" style="left:2415.00px;top:1798.47px;font-size:21.89px;line-height:21.89px;color:#3c3c3c;letter-spacing:0.463px;-webkit-text-stroke:0.52px #3c3c3c;">a year</div>
<div class="t" style="left:2489.12px;top:1798.78px;font-size:22.7px;line-height:22.7px;color:#7086a8;">ago</div>
<div class="t" style="left:2415.00px;top:1830.76px;font-size:18.6px;line-height:18.6px;color:#7086a8;">March 08, 2021</div>
<div style="position:absolute;left:2780px;top:1815.5px;width:16px;height:16px;background:#5acd3c;border-radius:50%;"></div>
<div class="t" style="left:2812.00px;top:1809.12px;font-size:22.3px;line-height:22.3px;color:#111111;letter-spacing:0.380px;">Successful</div>
<div class="t" style="left:3145.00px;top:1809.42px;font-size:22.3px;line-height:22.3px;color:#111111;letter-spacing:0.300px;">4 of 4</div>
<svg style="position:absolute;left:417px;top:1948px;overflow:visible;" width="24" height="32" viewBox="0 0 24 32"><path fill="#7282a3" d="M3,0H15.5L24,8.3V29A3,3 0 0 1 21,32H3A3,3 0 0 1 0,29V3A3,3 0 0 1 3,0Z"/><path fill="#fff" d="M14,2.2V10H22Z"/></svg>
<div class="t" style="left:458.00px;top:1956.24px;font-size:25.47px;line-height:25.47px;color:#111111;letter-spacing:0.465px;-webkit-text-stroke:0.61px #111111;">SMS.csv</div>
<div class="t" style="left:1464.50px;top:1957.42px;font-size:22.3px;line-height:22.3px;color:#111111;letter-spacing:0.300px;">User</div>
<div class="t" style="left:1683.50px;top:1957.42px;font-size:22.3px;line-height:22.3px;color:#111111;letter-spacing:0.300px;">CSV</div>
<div class="t" style="left:1903.50px;top:1957.42px;font-size:22.3px;line-height:22.3px;color:#111111;letter-spacing:0.300px;">UI</div>
<div class="t" style="left:1764.30px;width:1000px;text-align:center;top:1959.27px;font-size:21.89px;line-height:21.89px;color:#1e2535;letter-spacing:0.061px;-webkit-text-stroke:0.52px #1e2535;">0</div>
<div class="t" style="left:2415.00px;top:1946.47px;font-size:21.89px;line-height:21.89px;color:#3c3c3c;letter-spacing:0.463px;-webkit-text-stroke:0.52px #3c3c3c;">a year</div>
<div class="t" style="left:2489.12px;top:1946.78px;font-size:22.7px;line-height:22.7px;color:#7086a8;">ago</div>
<div class="t" style="left:2415.00px;top:1978.76px;font-size:18.6px;line-height:18.6px;color:#7086a8;">March 01, 2021</div>
<div style="position:absolute;left:2780px;top:1963.5px;width:16px;height:16px;background:#5acd3c;border-radius:50%;"></div>
<div class="t" style="left:2812.00px;top:1957.12px;font-size:22.3px;line-height:22.3px;color:#111111;letter-spacing:0.380px;">Successful</div>
<div class="t" style="left:3145.00px;top:1957.42px;font-size:22.3px;line-height:22.3px;color:#111111;letter-spacing:0.300px;">3 of 3</div>
<div style="position:absolute;left:3456px;top:1965px;width:8px;height:8px;background:#7282a3;border-radius:50%;"></div>
<div style="position:absolute;left:3468px;top:1965px;width:8px;height:8px;background:#7282a3;border-radius:50%;"></div>
<div style="position:absolute;left:3480px;top:1965px;width:8px;height:8px;background:#7282a3;border-radius:50%;"></div>
<div style="position:absolute;left:3554px;top:268px;width:2px;height:1800px;background:#e8e8e8;"></div>
<div style="position:absolute;left:3556px;top:268px;width:20px;height:1800px;background:#fafafa;"></div>
<div style="position:absolute;left:3562px;top:274px;width:14px;height:968px;background:#c1c1c1;border-radius:7px;"></div>
<svg style="position:absolute;left:0;top:0;overflow:visible" width="3576" height="2068">
<defs>
<filter id="sh" x="-20%" y="-50%" width="140%" height="200%"><feGaussianBlur in="SourceAlpha" stdDeviation="2.2"/><feOffset dx="0" dy="-5"/><feComponentTransfer><feFuncA type="linear" slope="0.75"/></feComponentTransfer><feMerge><feMergeNode/><feMergeNode in="SourceGraphic"/></feMerge></filter>
<filter id="sh2" x="-30%" y="-30%" width="160%" height="160%"><feGaussianBlur in="SourceAlpha" stdDeviation="2.5"/><feOffset dx="-3" dy="-3"/><feComponentTransfer><feFuncA type="linear" slope="0.6"/></feComponentTransfer><feMerge><feMergeNode/><feMergeNode in="SourceGraphic"/></feMerge></filter>
</defs>
<rect x="2749" y="192.6" width="166" height="75.9" fill="none" stroke="#bb2577" stroke-width="6" filter="url(#sh)"/>
<path fill="#bb2577" filter="url(#sh2)" d="M2761.5,353.9L2744,419L2727.5,402.7L2673,452A10,10 0 0 1 2659,437.5L2712,387.2L2696.6,369.7Z"/>
</svg>
</body></html>
